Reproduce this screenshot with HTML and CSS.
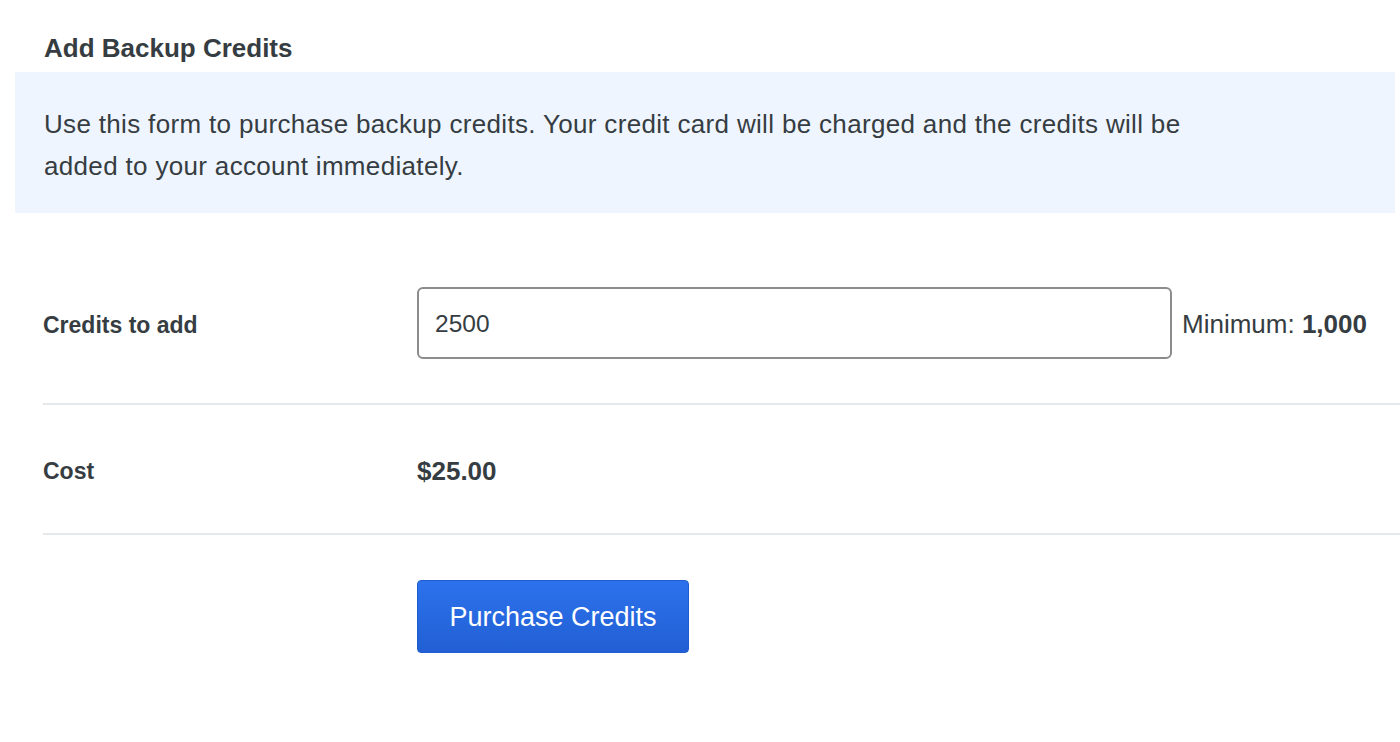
FILE: index.html
```html
<!DOCTYPE html>
<html>
<head>
<meta charset="utf-8">
<link rel="stylesheet" href="styles.css">
</head>
<body>
<div class="page">
  <h2 class="title">Add Backup Credits</h2>
  <div class="notice">
    <p>Use this form to purchase backup credits. Your credit card will be charged and the credits will be added to your account immediately.</p>
  </div>
  <div class="form">
    <div class="row row-input">
      <div class="label">Credits to add</div>
      <div class="field">
        <input class="input" type="text" value="2500">
        <span class="hint">Minimum: <b>1,000</b></span>
      </div>
    </div>
    <div class="row row-cost">
      <div class="label">Cost</div>
      <div class="field"><span class="cost">$25.00</span></div>
    </div>
    <div class="row row-button">
      <div class="label"></div>
      <div class="field"><button class="btn">Purchase Credits</button></div>
    </div>
  </div>
</div>
</body>
</html>
```
FILE: styles.css
```css
html, body {
  margin: 0;
  padding: 0;
  background: #ffffff;
}
body {
  font-family: "Liberation Sans", Arial, Helvetica, sans-serif;
  color: #363d42;
  width: 1400px;
  overflow: hidden;
}
.page {
  padding-left: 15px;
}
.title {
  margin: 0;
  padding: 34px 0 0 29px;
  height: 38px;
  font-size: 26px;
  font-weight: bold;
  line-height: 28px;
}
.notice {
  width: 1380px;
  background: #eef5fe;
  box-sizing: border-box;
  padding: 31px 0 28px 29px;
  height: 141px;
}
.notice p {
  margin: 0;
  max-width: 1200px;
  font-size: 26px;
  letter-spacing: 0.33px;
  line-height: 42px;
}
.form {
  margin-top: 28px;
  margin-left: 28px;
}
.row {
  display: flex;
  align-items: center;
  border-bottom: 2px solid #e6e9ec;
}
.row-input {
  padding: 46px 0 44px 0;
}
.row-cost {
  height: 128px;
}
.row-button {
  border-bottom: none;
  padding-top: 45px;
}
.label {
  width: 374px;
  flex-shrink: 0;
  font-size: 23px;
  font-weight: bold;
  line-height: 30px;
  padding-top: 4px;
}
.field {
  display: flex;
  align-items: center;
}
.row-cost .field {
  padding-top: 4px;
}
.input {
  width: 755px;
  height: 72px;
  box-sizing: border-box;
  border: 2px solid #8c8c8c;
  border-radius: 6px;
  padding: 2px 16px 0 16px;
  font-family: "Liberation Sans", Arial, sans-serif;
  font-size: 24.5px;
  color: #363d42;
  outline: none;
}
.hint {
  margin-left: 10px;
  font-size: 26px;
  white-space: nowrap;
  padding-top: 2px;
}
.hint b {
  font-weight: bold;
}
.cost {
  font-size: 26px;
  font-weight: bold;
}
.btn {
  width: 272px;
  height: 73px;
  border: 1px solid #1f5dcf;
  border-radius: 4px;
  background: linear-gradient(#2c72ec, #225fd4);
  color: #ffffff;
  font-family: "Liberation Sans", Arial, sans-serif;
  font-size: 27px;
  padding: 2px 0 0 0;
}
```
